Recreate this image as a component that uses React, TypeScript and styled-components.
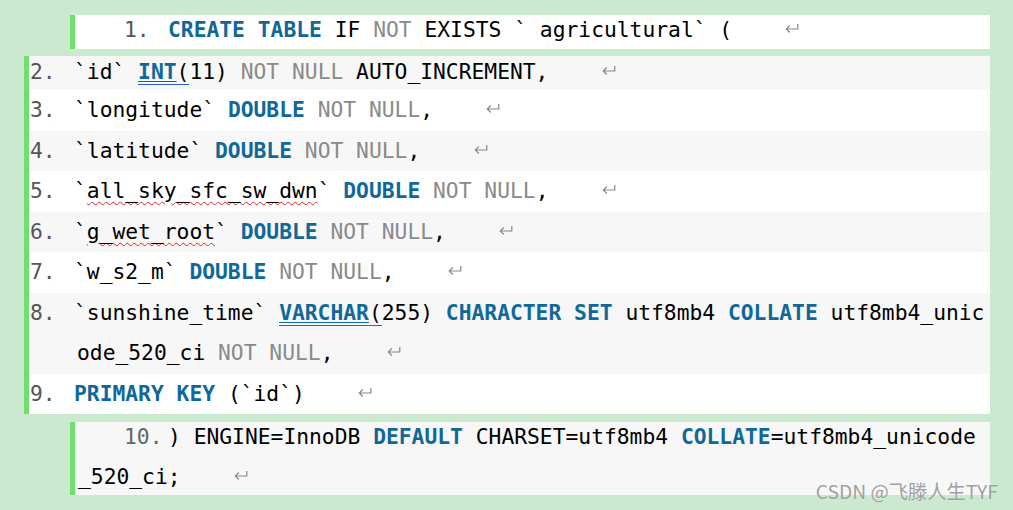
import React from "react";
import styled, { createGlobalStyle } from "styled-components";

const Global = createGlobalStyle`
  html, body {
    margin: 0;
    padding: 0;
    background: #cbe9cf;
  }
`;

const Page = styled.div`
  position: relative;
  width: 1013px;
  height: 510px;
  box-sizing: border-box;
  padding-top: 15px;
  display: flex;
  flex-direction: column;
  background: #cbe9cf;
  font-family: "DejaVu Sans Mono", "Liberation Mono", monospace;
  font-size: 21.3px;
  color: #000;
  overflow: hidden;
`;

const Block = styled.div<{ $left: number; $top: number; $bg: string; $pad: number }>`
  margin: ${(p) => p.$top}px 23px 0 ${(p) => p.$left}px;
  padding-left: ${(p) => p.$pad}px;
  background: ${(p) => p.$bg};
  border-left: 5px solid #6de06f;
  white-space: pre;
`;

const Line = styled.div<{ $lh: number; $pt?: number; $pb?: number }>`
  display: flex;
  line-height: ${(p) => p.$lh}px;
  padding-top: ${(p) => p.$pt ?? 0}px;
  padding-bottom: ${(p) => p.$pb ?? 0}px;
`;

const Row = styled.div<{ $shade: boolean; $lh: number; $pb?: number }>`
  display: flex;
  line-height: ${(p) => p.$lh}px;
  padding-bottom: ${(p) => p.$pb ?? 0}px;
  background: ${(p) => (p.$shade ? "#f7f7f7" : "#ffffff")};
`;

const Num = styled.span<{ $indent?: number; $tone?: string }>`
  flex: none;
  width: 44px;
  margin-left: ${(p) => p.$indent ?? 0}px;
  color: ${(p) => p.$tone ?? "#555555"};
`;

const Code = styled.div`
  display: flex;
  flex-direction: column;
`;

const Text = styled.span<{ $shift?: number }>`
  padding-left: ${(p) => p.$shift ?? 0}px;
`;

const K = styled.span`
  font-weight: bold;
  color: #0f6899;
`;

const G = styled.span`
  color: #8a8a8a;
`;

const Linked = styled.span`
  text-decoration: underline;
  text-decoration-thickness: 1px;
  text-underline-offset: 2px;
`;

const Grammar = styled.span`
  border-bottom: 1px solid #2f5fd6;
`;

const Spell = styled.span`
  text-decoration: underline wavy #e02828;
  text-decoration-thickness: 1px;
  text-underline-offset: 3px;
`;

const RetIcon = styled.svg`
  display: inline-block;
  vertical-align: 4px;
  margin-left: 2px;
`;

const Mark = styled.div`
  position: absolute;
  right: 15px;
  bottom: 8px;
  font-family: "Noto Sans CJK SC", "Noto Sans", sans-serif;
  font-size: 19.3px;
  line-height: 22px;
  color: #a0a0a0;
  text-shadow: 0 0 1px rgba(255, 255, 255, 0.6);
  white-space: nowrap;
`;

const Ret = () => (
  <>
    {"    "}
    <RetIcon width="14" height="9" viewBox="0 0 14 9">
      <path
        d="M12.8 0V5H1.3M4.8 1.5L1.3 5L4.8 8.5"
        fill="none"
        stroke="#888888"
        strokeWidth="1.2"
      />
    </RetIcon>
  </>
);

const NotNull = () => (
  <>
    {" "}
    <G>NOT</G> <G>NULL</G>,
  </>
);

export default function App() {
  return (
    <>
      <Global />
      <Page>
        <Block $left={70} $top={0} $bg="#ffffff" $pad={3}>
          <Line $lh={30} $pb={4}>
            <Num $indent={46}>1.</Num>
            <Text>
              <K>CREATE</K> <K>TABLE</K>
              {" IF "}
              <G>NOT</G>
              {" EXISTS ` agricultural` ("}
              <Ret />
            </Text>
          </Line>
        </Block>

        <Block $left={24} $top={7} $bg="#ffffff" $pad={1}>
          <Row $shade={true} $lh={31} $pb={3}>
            <Num>2.</Num>
            <Text>
              {"`id` "}
              <Grammar>
                <K>
                  <Linked>INT</Linked>
                </K>
                (
              </Grammar>
              {"11) "}
              <G>NOT</G> <G>NULL</G>
              {" AUTO_INCREMENT,"}
              <Ret />
            </Text>
          </Row>
          <Row $shade={false} $lh={40.5}>
            <Num>3.</Num>
            <Text>
              {"`longitude` "}
              <K>DOUBLE</K>
              <NotNull />
              <Ret />
            </Text>
          </Row>
          <Row $shade={true} $lh={40.5}>
            <Num>4.</Num>
            <Text>
              {"`latitude` "}
              <K>DOUBLE</K>
              <NotNull />
              <Ret />
            </Text>
          </Row>
          <Row $shade={false} $lh={40.5}>
            <Num>5.</Num>
            <Text>
              {"`"}
              <Spell>all_sky_sfc_sw_dwn</Spell>
              {"` "}
              <K>DOUBLE</K>
              <NotNull />
              <Ret />
            </Text>
          </Row>
          <Row $shade={true} $lh={40.5}>
            <Num>6.</Num>
            <Text>
              {"`"}
              <Spell>g_wet_root</Spell>
              {"` "}
              <K>DOUBLE</K>
              <NotNull />
              <Ret />
            </Text>
          </Row>
          <Row $shade={false} $lh={40.5}>
            <Num>7.</Num>
            <Text>
              {"`w_s2_m` "}
              <K>DOUBLE</K>
              <NotNull />
              <Ret />
            </Text>
          </Row>
          <Row $shade={true} $lh={40.5}>
            <Num>8.</Num>
            <Code>
              <Text>
                {"`sunshine_time` "}
                <Grammar>
                  <K>
                    <Linked>VARCHAR</Linked>
                  </K>
                  (
                </Grammar>
                {"255) "}
                <K>CHARACTER</K> <K>SET</K>
                {" utf8mb4 "}
                <K>COLLATE</K>
                {" utf8mb4_unic"}
              </Text>
              <Text $shift={3}>
                {"ode_520_ci"}
                <NotNull />
                <Ret />
              </Text>
            </Code>
          </Row>
          <Row $shade={false} $lh={40.5}>
            <Num>9.</Num>
            <Text>
              <K>PRIMARY</K> <K>KEY</K>
              {" (`id`)"}
              <Ret />
            </Text>
          </Row>
        </Block>

        <Block $left={70} $top={8} $bg="#f7f7f7" $pad={3}>
          <Line $lh={30}>
            <Num $indent={46} $tone="#666666">
              10.
            </Num>
            <Text>
              {") ENGINE=InnoDB "}
              <K>DEFAULT</K>
              {" CHARSET=utf8mb4 "}
              <K>COLLATE</K>
              {"=utf8mb4_unicode"}
            </Text>
          </Line>
          <Line $lh={36} $pt={7}>
            <Text>
              {"_520_ci;"}
              <Ret />
            </Text>
          </Line>
        </Block>

        <Mark>CSDN @飞滕人生TYF</Mark>
      </Page>
    </>
  );
}
